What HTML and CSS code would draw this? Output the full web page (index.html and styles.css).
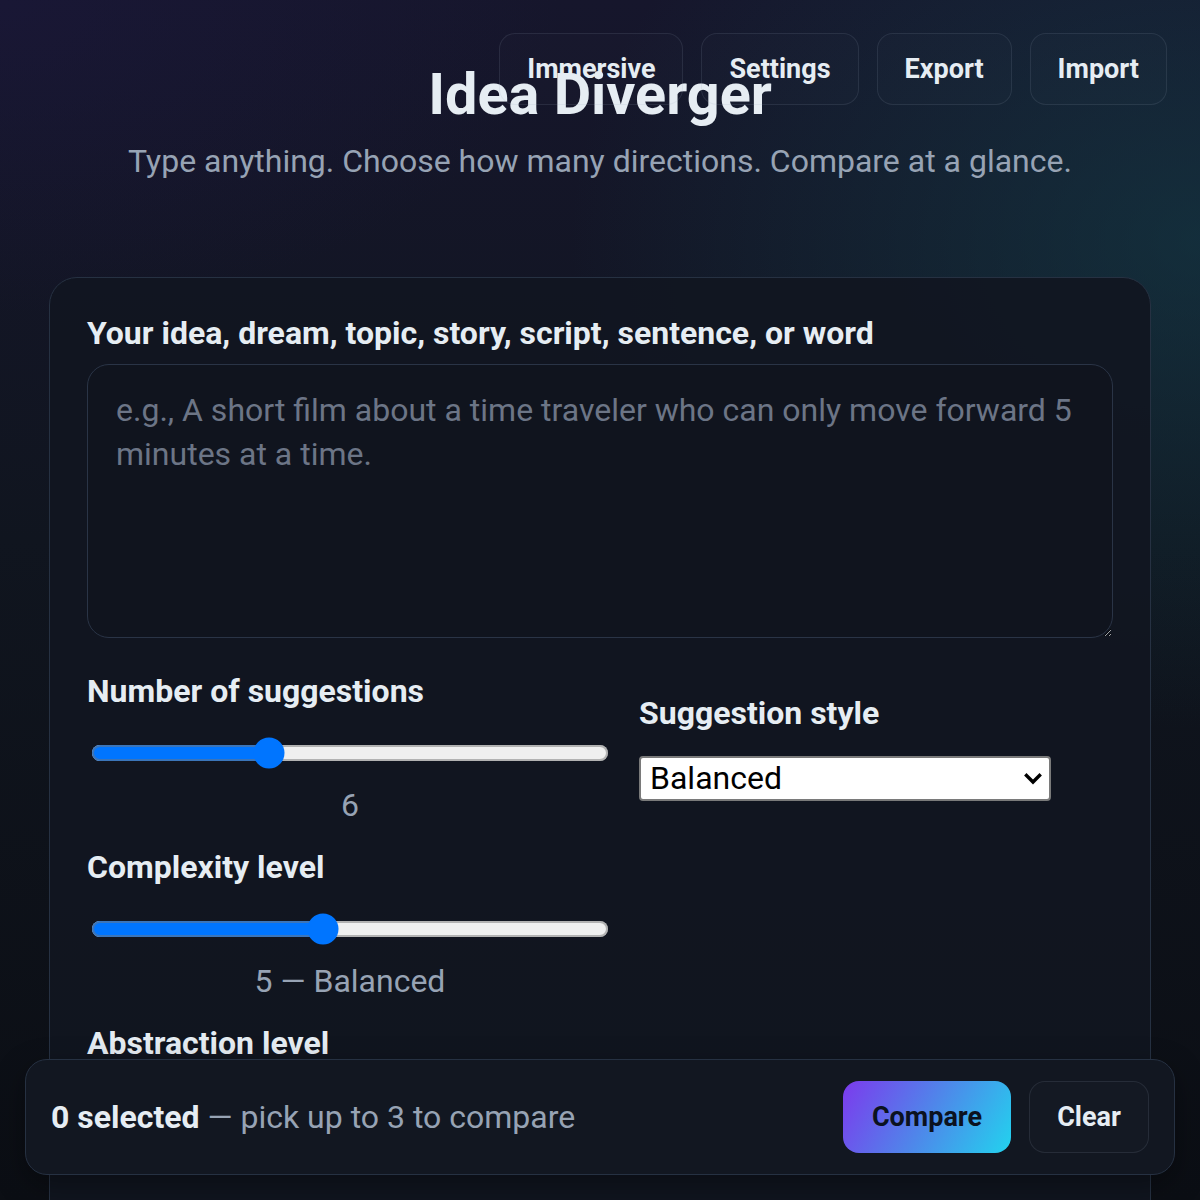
FILE: index.html
```html
<!DOCTYPE html>
<html lang="en">
<head>
<meta charset="utf-8">
<title>Idea Diverger</title>
<link rel="stylesheet" href="styles.css">
</head>
<body>
<div class="app">
  <nav class="toolbar">
    <button class="tb-btn">Immersive</button>
    <button class="tb-btn">Settings</button>
    <button class="tb-btn">Export</button>
    <button class="tb-btn">Import</button>
  </nav>
  <header class="hero">
    <h1 class="title">Idea Diverger</h1>
    <p class="subtitle">Type anything. Choose how many directions. Compare at a glance.</p>
  </header>
  <main class="card">
    <label class="field-label" for="idea">Your idea, dream, topic, story, script, sentence, or word</label>
    <textarea id="idea" class="idea-input" placeholder="e.g., A short film about a time traveler who can only move forward 5 minutes at a time."></textarea>
    <div class="controls">
      <div class="group">
        <label class="field-label slim" for="count">Number of suggestions</label>
        <input id="count" class="range" type="range" min="1" max="16" value="6">
        <div class="value">6</div>
      </div>
      <div class="group">
        <label class="field-label slim" for="style">Suggestion style</label>
        <div class="select-wrap">
          <select id="style" class="select">
            <option>Balanced</option>
            <option>Creative</option>
            <option>Practical</option>
          </select>
          <svg class="chev" width="18" height="12" viewBox="0 0 18 12" aria-hidden="true">
            <path d="M2.5 2.5 L9 9 L15.5 2.5" fill="none" stroke="#000" stroke-width="3.4" stroke-linecap="square" stroke-linejoin="miter"/>
          </svg>
        </div>
      </div>
      <div class="group">
        <label class="field-label slim" for="complexity">Complexity level</label>
        <input id="complexity" class="range" type="range" min="1" max="10" value="5">
        <div class="value">5 — Balanced</div>
      </div>
      <div></div>
      <div class="group">
        <label class="field-label slim" for="abstraction">Abstraction level</label>
        <input id="abstraction" class="range" type="range" min="1" max="10" value="5">
        <div class="value">5 — Balanced</div>
      </div>
    </div>
  </main>
  <div class="compare-bar">
    <div class="compare-text"><strong>0 selected</strong> — pick up to 3 to compare</div>
    <div class="compare-actions">
      <button class="btn-primary">Compare</button>
      <button class="tb-btn">Clear</button>
    </div>
  </div>
</div>
</body>
</html>
```

FILE: styles.css
```css
* { box-sizing: border-box; }
html, body { margin: 0; padding: 0; }
body {
  font-family: Roboto, "Liberation Sans", sans-serif;
  color: #e6edf3;
  background: #0c1017;
}
.app {
  position: relative;
  height: 100vh;
  overflow: hidden;
  background:
    radial-gradient(ellipse 800px 450px at 0% 0%, rgba(28, 24, 62, 0.5), rgba(28, 24, 62, 0) 70%),
    radial-gradient(ellipse 900px 700px at 100% 20%, rgba(20, 70, 80, 0.5), rgba(20, 70, 80, 0) 70%),
    linear-gradient(180deg, #16162c 0%, #10151f 45%, #0b0e14 100%);
}
.toolbar {
  position: absolute;
  top: 33px;
  right: 33px;
  display: flex;
  gap: 18px;
  z-index: 2;
}
.tb-btn {
  height: 72px;
  padding: 0 27px;
  border: 1.5px solid rgba(148, 163, 184, 0.14);
  border-radius: 16px;
  background: rgba(255, 255, 255, 0.01);
  color: #e6edf3;
  font-family: inherit;
  font-size: 27px;
  font-weight: 700;
}
.hero {
  padding-top: 61px;
  text-align: center;
}
.title {
  margin: 0;
  font-size: 57.6px;
  line-height: 68px;
  font-weight: 700;
  color: #e6edf3;
}
.subtitle {
  margin: 13px 0 0;
  font-size: 32px;
  line-height: 38px;
  color: #97a3b4;
}
.card {
  margin: 96.5px 49px 0;
  padding: 36px 37px 60px;
  border: 1.5px solid #263142;
  border-radius: 28px;
  background: rgba(17, 22, 33, 0.92);
}
.field-label {
  display: block;
  font-size: 32px;
  line-height: 38px;
  font-weight: 700;
  color: #e6edf3;
  margin-bottom: 12.5px;
}
.field-label.slim { margin-bottom: 23.5px; }
.idea-input {
  display: block;
  width: 100%;
  height: 274px;
  padding: 23px 28px;
  border: 1.5px solid #2a3446;
  border-radius: 22px;
  background: #10141e;
  color: #e6edf3;
  font-family: inherit;
  font-size: 32px;
  line-height: 44px;
  resize: vertical;
}
.idea-input::placeholder { color: #6c7586; }
.controls {
  display: grid;
  grid-template-columns: 526px 1fr;
  column-gap: 26px;
  row-gap: 24px;
  align-items: center;
  margin-top: 33.5px;
}
.group { display: flex; flex-direction: column; }
.range {
  zoom: 2;
  width: 259px;
  margin: 2px;
}
.value {
  margin-top: 12.5px;
  text-align: center;
  font-size: 32px;
  line-height: 38px;
  color: #97a3b4;
}
.select-wrap {
  position: relative;
  width: 412px;
  height: 45px;
}
.select {
  appearance: none;
  -webkit-appearance: none;
  display: block;
  width: 100%;
  height: 100%;
  padding: 0 40px 0 9px;
  font-family: inherit;
  font-size: 32px;
  background: #fff;
  color: #000;
  border: 2px solid #7a7a7a;
  border-radius: 4px;
}
.chev {
  position: absolute;
  right: 9px;
  top: 17px;
  pointer-events: none;
}
.compare-bar {
  position: absolute;
  left: 25px;
  right: 25px;
  bottom: 25px;
  height: 116px;
  display: flex;
  align-items: center;
  justify-content: space-between;
  padding: 0 25px;
  border: 1.5px solid #263142;
  border-radius: 22px;
  background: #121721;
  box-shadow: 0 10px 30px rgba(0, 0, 0, 0.35);
  z-index: 3;
}
.compare-text {
  font-size: 32px;
  color: #97a3b4;
}
.compare-text strong { color: #e6edf3; font-weight: 700; }
.compare-actions { display: flex; gap: 18px; }
.btn-primary {
  height: 72px;
  width: 168px;
  border: 0;
  border-radius: 16px;
  background: linear-gradient(120deg, #7c3aed 0%, #4f86ea 50%, #22d3ee 100%);
  color: #0b1220;
  font-family: inherit;
  font-size: 27px;
  font-weight: 700;
}
.compare-actions .tb-btn { width: 120px; padding: 0; }
```
